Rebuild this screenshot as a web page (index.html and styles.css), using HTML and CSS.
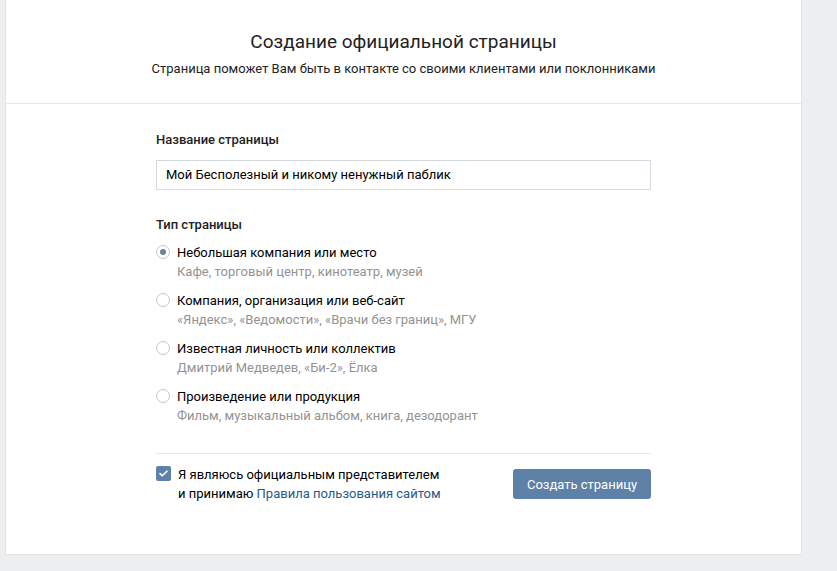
FILE: index.html
```html
<!DOCTYPE html>
<html lang="ru">
<head>
  <meta charset="UTF-8">
  <title>Создание официальной страницы</title>
  <link rel="stylesheet" href="styles.css">
</head>
<body>
  <div class="card">
    <div class="card-header">
      <h1 class="title">Создание официальной страницы</h1>
      <div class="subtitle">Страница поможет Вам быть в контакте со своими клиентами или поклонниками</div>
    </div>
    <div class="card-body">
      <div class="form">
        <div class="label">Название страницы</div>
        <div class="input">Мой Бесполезный и никому ненужный паблик</div>

        <div class="label label-type">Тип страницы</div>
        <div class="radio-item">
          <span class="radio radio-on"></span>
          <div>
            <div class="radio-title">Небольшая компания или место</div>
            <div class="radio-sub">Кафе, торговый центр, кинотеатр, музей</div>
          </div>
        </div>
        <div class="radio-item">
          <span class="radio"></span>
          <div>
            <div class="radio-title">Компания, организация или веб-сайт</div>
            <div class="radio-sub">«Яндекс», «Ведомости», «Врачи без границ», МГУ</div>
          </div>
        </div>
        <div class="radio-item">
          <span class="radio"></span>
          <div>
            <div class="radio-title">Известная личность или коллектив</div>
            <div class="radio-sub">Дмитрий Медведев, «Би-2», Ёлка</div>
          </div>
        </div>
        <div class="radio-item">
          <span class="radio"></span>
          <div>
            <div class="radio-title">Произведение или продукция</div>
            <div class="radio-sub">Фильм, музыкальный альбом, книга, дезодорант</div>
          </div>
        </div>

        <div class="footer">
          <div class="agree">
            <span class="checkbox">
              <svg width="9" height="7" viewBox="0 0 9 7"><path d="M1 3.6l2.3 2.2L8 1.2" fill="none" stroke="#fff" stroke-width="1.6" stroke-linecap="round" stroke-linejoin="round"/></svg>
            </span>
            <div class="agree-text">Я являюсь официальным представителем<br>и принимаю <a href="#" class="link">Правила пользования сайтом</a></div>
          </div>
          <button class="button">Создать страницу</button>
        </div>
      </div>
    </div>
  </div>
</body>
</html>
```

FILE: styles.css
```css
body {
  margin: 0;
  background-color: #edeef0;
  font-family: Roboto, "Open Sans", sans-serif;
  font-size: 13px;
  color: #222;
}
.card {
  margin-left: 5px;
  width: 795px;
  background: #fff;
  border: 1px solid #e3e4e8;
  border-top: none;
}
.card-header {
  height: 104px;
  box-sizing: border-box;
  padding-top: 30px;
  text-align: center;
  border-bottom: 1px solid #e7e8ec;
}
.title {
  margin: 0;
  font-size: 19px;
  font-weight: 400;
  line-height: 24px;
  color: #222;
}
.subtitle {
  margin-top: 6px;
  line-height: 18px;
  color: #222;
}
.card-body {
  padding: 27px 0 51px;
}
.form {
  width: 495px;
  margin: 0 auto;
}
.label {
  font-weight: 500;
  line-height: 18px;
  color: #222;
}
.input {
  margin-top: 11px;
  height: 30px;
  box-sizing: border-box;
  border: 1px solid #d3d9de;
  padding: 0 9px;
  line-height: 28px;
  color: #000;
}
.label-type {
  margin-top: 26px;
  margin-bottom: 9px;
}
.radio-item {
  display: flex;
  gap: 7px;
  margin-bottom: 10px;
  line-height: 19px;
}
.radio {
  flex: none;
  width: 14px;
  height: 14px;
  box-sizing: border-box;
  margin-top: 2px;
  border: 1px solid #c0c7cf;
  border-radius: 50%;
  display: flex;
  align-items: center;
  justify-content: center;
}
.radio-on::after {
  content: "";
  width: 6px;
  height: 6px;
  border-radius: 50%;
  background: #6f8196;
}
.radio-title {
  color: #000;
}
.radio-sub {
  color: #939393;
}
.footer {
  margin-top: 28px;
  padding-top: 11px;
  border-top: 1px solid #e7e8ec;
  display: flex;
  align-items: center;
  justify-content: space-between;
}
.agree {
  display: flex;
  gap: 7px;
  line-height: 19px;
}
.checkbox {
  flex: none;
  width: 15px;
  height: 15px;
  margin-top: 1px;
  border-radius: 2px;
  background: #5e81a8;
  display: flex;
  align-items: center;
  justify-content: center;
}
.agree-text {
  color: #000;
}
.link {
  color: #2a5885;
  text-decoration: none;
}
.button {
  width: 138px;
  height: 30px;
  border: none;
  border-radius: 3px;
  background: #5e81a8;
  color: #fff;
  font-family: Roboto, "Open Sans", sans-serif;
  font-size: 13px;
  padding: 0;
}
```
